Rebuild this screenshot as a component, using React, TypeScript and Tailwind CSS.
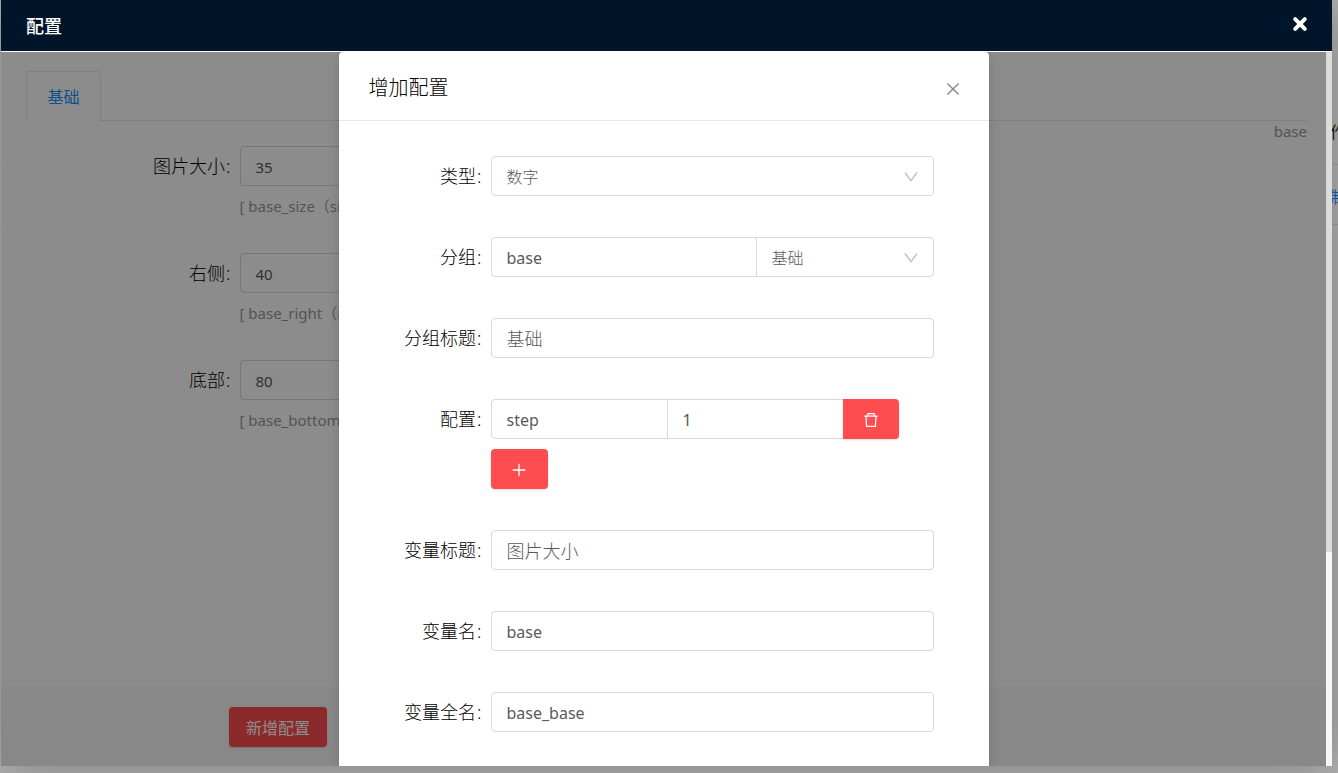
import { useState } from 'react'
import type { ReactNode } from 'react'
import { AiOutlineClose, AiOutlineDelete, AiOutlineDown, AiOutlinePlus } from 'react-icons/ai'

const inputClass =
  'h-10 min-w-0 border border-[#d9d9d9] bg-white px-[15px] text-[#595959] outline-none focus:border-[#1890ff]'

const labelClass = 'shrink-0 pr-[9px] text-right text-lg leading-10 font-light text-black'

const settings = [
  { id: 'base_size', label: '图片大小', value: '35', hint: '[ base_size（size） ]' },
  { id: 'base_right', label: '右侧', value: '40', hint: '[ base_right（right） ]' },
  { id: 'base_bottom', label: '底部', value: '80', hint: '[ base_bottom（bottom） ]' },
]

interface FormRowProps {
  id: string
  label: string
  children: ReactNode
}

function FormRow({ id, label, children }: FormRowProps) {
  return (
    <div className="mb-[41px] flex">
      <label htmlFor={id} className={`${labelClass} w-[122px]`}>
        {label}
        <span className="ml-px">:</span>
      </label>
      <div className="min-w-0 flex-1">{children}</div>
    </div>
  )
}

interface SelectBoxProps {
  id?: string
  label: string
  options: string[]
  className: string
  selectClass: string
}

function SelectBox({ id, label, options, className, selectClass }: SelectBoxProps) {
  return (
    <div className={`relative ${className}`}>
      <select
        id={id}
        aria-label={label}
        className={`${inputClass} w-full appearance-none pt-0.5 text-base font-light ${selectClass}`}
      >
        {options.map((o) => (
          <option key={o}>{o}</option>
        ))}
      </select>
      <AiOutlineDown className="pointer-events-none absolute top-3 right-[14px] text-lg text-[#bfbfbf]" />
    </div>
  )
}

function SettingsPage() {
  return (
    <div className="flex h-full flex-col bg-white">
      <div className="min-h-0 flex-1 overflow-hidden pt-[19px] pr-[19px] pl-[25px]">
        <div className="flex border-b border-[#e8e8e8]">
          <button className="-mb-px h-[50px] min-w-[75px] rounded-t border border-b-0 border-[#e8e8e8] bg-white px-5 text-base text-[#1890ff]">
            基础
          </button>
        </div>
        <p className="mb-[5px] text-right text-[15px] leading-5 text-[#999]">base</p>
        {settings.map((s) => (
          <div key={s.id} className="mb-[25px] flex">
            <label htmlFor={s.id} className={`${labelClass} w-1/6`}>
              {s.label}
              <span className="ml-px">:</span>
            </label>
            <div className="w-1/3">
              <input id={s.id} defaultValue={s.value} className={`${inputClass} w-full rounded pt-0.5 text-[15px]`} />
              <p className="h-[42px] text-[15px] leading-10 text-[#999]">{s.hint}</p>
            </div>
          </div>
        ))}
      </div>
      <div className="bg-[#f7f7f7] pt-5 pr-[19px] pb-[19px] pl-[228px]">
        <button className="block h-10 rounded bg-[#ff4d4f] px-[17px] pt-0.5 text-base text-white shadow-sm">
          新增配置
        </button>
      </div>
    </div>
  )
}

function AddDialog() {
  const [extra, setExtra] = useState([{ key: 'step', value: '1' }])

  return (
    <section
      role="dialog"
      aria-label="增加配置"
      className="mx-auto min-h-full w-full max-w-[650px] rounded-t bg-white shadow-[0_4px_12px_rgba(0,0,0,0.15)]"
    >
      <header className="flex h-[69px] items-center justify-between border-b border-[#e8e8e8] pt-1 pr-[27px] pl-[30px]">
        <h2 className="text-xl font-light text-black">增加配置</h2>
        <button aria-label="关闭" className="pt-0.5 text-lg text-[#8c8c8c]">
          <AiOutlineClose />
        </button>
      </header>
      <form className="pt-[35px] pr-[55px] pl-[30px]">
        <FormRow id="type" label="类型">
          <SelectBox id="type" label="类型" options={['数字', '文本']} className="" selectClass="rounded" />
        </FormRow>
        <FormRow id="group" label="分组">
          <div className="flex">
            <input id="group" defaultValue="base" className={`${inputClass} flex-1 rounded-l pt-0.5 text-base`} />
            <SelectBox label="分组选择" options={['基础']} className="-ml-px w-[178px]" selectClass="rounded-r" />
          </div>
        </FormRow>
        <FormRow id="group-title" label="分组标题">
          <input id="group-title" defaultValue="基础" className={`${inputClass} w-full rounded text-lg font-light`} />
        </FormRow>
        <FormRow id="option-0" label="配置">
          {extra.map((item, i) => (
            <div key={i} className="mb-[10px] flex max-w-[408px]">
              <input
                id={`option-${i}`}
                defaultValue={item.key}
                className={`${inputClass} flex-1 rounded-l pt-0.5 text-base`}
              />
              <input
                aria-label="配置值"
                defaultValue={item.value}
                className={`${inputClass} -ml-px flex-1 border-r-0 pt-0.5 text-base`}
              />
              <button
                type="button"
                aria-label="删除"
                onClick={() => setExtra(extra.filter((_, n) => n !== i))}
                className="flex h-10 w-14 items-center justify-center rounded-r bg-[#ff4d4f] pt-0.5 text-lg text-white shadow-sm"
              >
                <AiOutlineDelete />
              </button>
            </div>
          ))}
          <button
            type="button"
            aria-label="添加"
            onClick={() => setExtra([...extra, { key: '', value: '' }])}
            className="flex h-10 w-[57px] items-center justify-center rounded bg-[#ff4d4f] pt-0.5 text-lg text-white shadow-sm"
          >
            <AiOutlinePlus />
          </button>
        </FormRow>
        <FormRow id="var-title" label="变量标题">
          <input id="var-title" defaultValue="图片大小" className={`${inputClass} w-full rounded text-lg font-light`} />
        </FormRow>
        <FormRow id="var-name" label="变量名">
          <input id="var-name" defaultValue="base" className={`${inputClass} w-full rounded pt-0.5 text-base`} />
        </FormRow>
        <FormRow id="var-full" label="变量全名">
          <input id="var-full" defaultValue="base_base" className={`${inputClass} w-full rounded pt-0.5 text-base`} />
        </FormRow>
      </form>
    </section>
  )
}

export default function App() {
  return (
    <div className="relative h-screen overflow-hidden bg-[#b2b2b2] font-['Noto_Sans','Noto_Sans_CJK_SC',sans-serif]">
      {/* list page under the drawer */}
      <div className="pt-[104px] text-right text-base whitespace-nowrap">
        <div className="-mr-2 h-[61px] border-b border-[#a0a0a0] leading-[56px] text-[#181818]">操作</div>
        <div className="-mr-2 h-[60px] border-b border-[#a0a0a0] leading-[64px] text-[#1165b2]">复制</div>
      </div>

      {/* drawer */}
      <div className="absolute top-0 right-[6px] bottom-[7px] left-px flex flex-col shadow-[1px_1px_50px_rgba(0,0,0,0.3)]">
        <header className="flex h-[52px] shrink-0 items-center justify-between border-b border-white bg-[#001529] pr-6 pl-[25px]">
          <h1 className="text-lg font-medium text-white">配置</h1>
          <button aria-label="关闭" className="pb-1 text-white">
            <svg width="16" height="16" viewBox="0 0 16 16" fill="none" stroke="currentColor" strokeWidth="4" strokeLinecap="round">
              <path d="M3.2 3.2l9.6 9.6M12.8 3.2l-9.6 9.6" />
            </svg>
          </button>
        </header>
        <div className="flex min-h-0 flex-1">
          <main className="relative min-w-0 flex-1 overflow-hidden">
            <SettingsPage />
            <div className="absolute inset-0 overflow-hidden bg-black/45">
              <AddDialog />
            </div>
          </main>
          {/* scroll track */}
          <div className="w-[6px] shrink-0 bg-[#f7f7f7]">
            <div className="h-[70%] bg-[#dcdcdc]" />
          </div>
        </div>
      </div>
    </div>
  )
}
